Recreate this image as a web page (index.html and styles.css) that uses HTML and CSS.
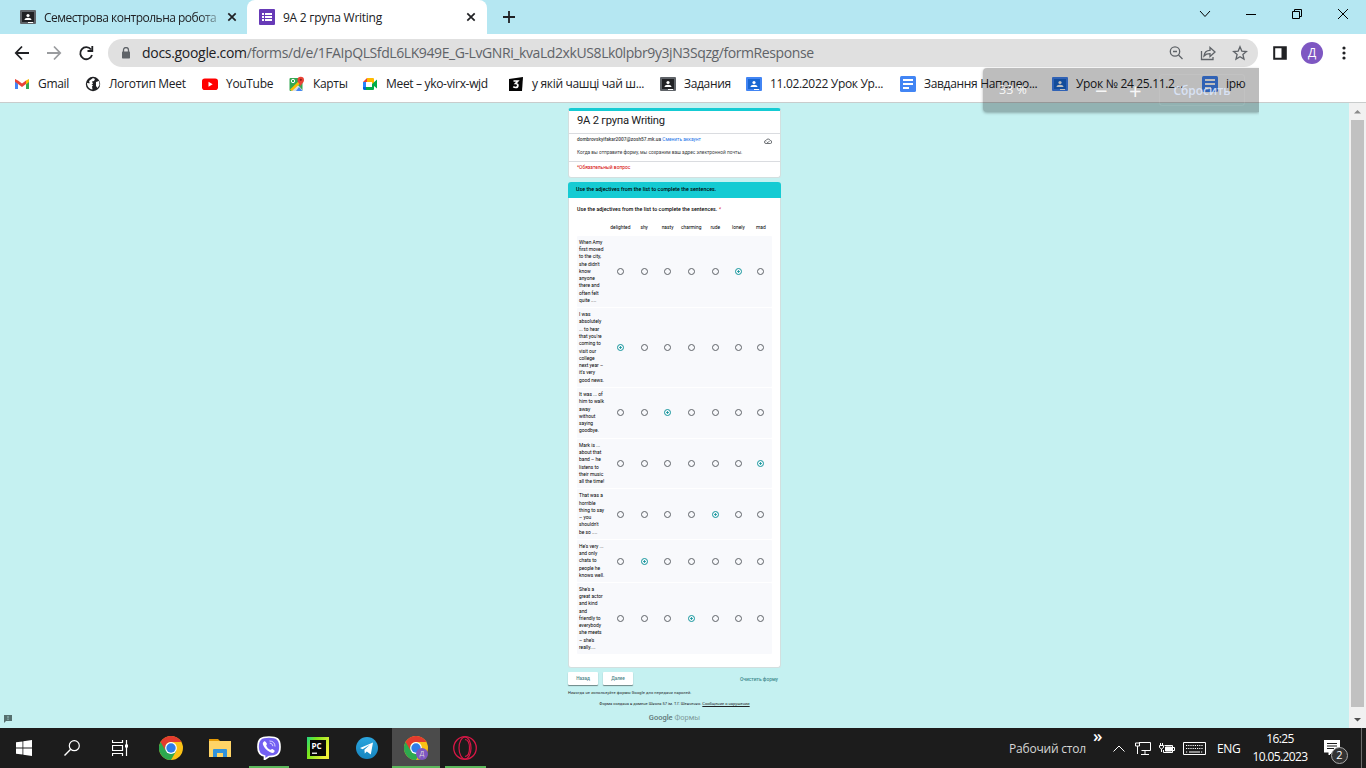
FILE: index.html
```html
<!DOCTYPE html>
<html lang="ru">
<head>
<meta charset="utf-8">
<title>9А 2 група Writing</title>
<link rel="stylesheet" href="styles.css">
</head>
<body>
<svg class="defs" width="0" height="0">
  <symbol id="classroom" viewBox="0 0 16 16"><rect y="1" width="16" height="14" rx="1" fill="var(--edge)"/><rect x="2" y="3" width="12" height="10" fill="var(--board)"/><circle cx="8" cy="6.5" r="1.6" fill="#fff"/><path d="M4.5 11c0-3 7-3 7 0zM8 13h5v1H8z" fill="#fff"/></symbol>
  <symbol id="doc" viewBox="0 0 16 16"><rect width="16" height="16" rx="1.5" fill="var(--board)"/><path d="M3 3h10v2H3zM3 7h10v2H3zM3 11h6v2H3z" fill="#fff"/></symbol>
  <symbol id="close" viewBox="0 0 10 10"><path d="M1.3 1.3l7.4 7.4M8.7 1.3L1.3 8.7" stroke="#202124" stroke-width="1.7"/></symbol>
  <symbol id="chrome" viewBox="0 0 24 24"><circle cx="12" cy="12" r="12" fill="#fbc116"/><path d="M12 12L1.6 6A12 12 0 0 0 12 24l5.2-9z" fill="#2da94f"/><path d="M1.6 6a12 12 0 0 1 20.8 0H12a6 6 0 0 0-5.2 9z" fill="#e33b2e"/><circle cx="12" cy="12" r="5.9" fill="#fff"/><circle cx="12" cy="12" r="4.7" fill="#2f7de9"/></symbol>
</svg>
<header class="browser">
  <div class="tabs">
    <div class="tab first"><svg class="fav dark"><use href="#classroom"/></svg><span class="tabname fade">Семестрова контрольна робота</span><svg class="x"><use href="#close"/></svg></div>
    <div class="tab active"><svg class="fav" viewBox="0 0 16 16"><rect width="16" height="16" rx="1" fill="#673ab7"/><path d="M3 4h2v2H3zm0 3h2v2H3zm0 3h2v2H3zM6 4h7v2H6zm0 3h7v2H6zm0 3h7v2H6z" fill="#fff"/></svg><span class="tabname">9А 2 група Writing</span><svg class="x"><use href="#close"/></svg></div>
    <svg class="plus" viewBox="0 0 12 12"><path d="M6 0v12M0 6h12" stroke="#202124" stroke-width="1.8"/></svg>
    <div class="winctl">
      <svg width="12" height="12" viewBox="0 0 12 12"><path d="M1 3l5 5.5L11 3"/></svg>
      <svg width="12" height="12" viewBox="0 0 12 12"><path d="M1 6.5h10"/></svg>
      <svg width="12" height="12" viewBox="0 0 12 12"><path d="M1.5 3.5h7v7h-7zM3.500 3.500v-2h7v7h-2"/></svg>
      <svg width="12" height="12" viewBox="0 0 12 12"><path d="M1 1l10 10M11 1L1 11"/></svg>
    </div>
  </div>
  <div class="toolbar">
    <svg class="nav" viewBox="0 0 16 16"><path d="M15 8H2M8 1.500L1.800 8 8 14.500"/></svg>
    <svg class="nav off" viewBox="0 0 16 16"><path d="M1 8h13M8 1.500L14.200 8 8 14.500"/></svg>
    <svg class="nav" viewBox="0 0 16 16"><path d="M13 4.500A6 6 0 1 0 14 10M14.300 1v5H9.500"/></svg>
    <div class="omnibox">
      <svg class="lock" viewBox="0 0 10 12"><path d="M2.500 5V3a2.500 2.500 0 0 1 5 0v2" fill="none" stroke="#5f6368" stroke-width="1.300"/><rect x="1" y="4.500" width="8" height="7" rx=".7" fill="#5f6368"/></svg>
      <span class="url"><b>docs.google.com</b>/forms/d/e/1FAIpQLSfdL6LK949E_G-LvGNRi_kvaLd2xkUS8Lk0lpbr9y3jN3Sqzg/formResponse</span>
      <div class="actions">
        <svg viewBox="0 0 16 16"><circle cx="7" cy="6.500" r="4.700"/><path d="M10.500 10l4 4M5 6.500h4"/></svg>
        <svg viewBox="0 0 16 16"><path d="M1.500 6v8.500H13V12M4 11c.5-4 2.500-5.700 6-5.700V2.500L15 7l-5 4.500V8.700C7 8.700 5.500 9.500 4 11z"/></svg>
        <svg viewBox="0 0 16 16"><path d="M8 1.800l1.800 4.300 4.600.4-3.500 3 1.100 4.600L8 11.700l-4 2.400 1.100-4.600-3.500-3 4.600-.4z"/></svg>
      </div>
    </div>
    <svg class="panel" viewBox="0 0 14 14"><path d="M1.200 1.200h11.600v11.600H1.200z" fill="none" stroke="#202124" stroke-width="2"/><path d="M8.500 1H13v12H8.500z" fill="#202124"/></svg>
    <span class="avatar">Д</span>
    <svg class="dots" viewBox="0 0 4 14"><circle cx="2" cy="2" r="1.600"/><circle cx="2" cy="7" r="1.600"/><circle cx="2" cy="12" r="1.600"/></svg>
  </div>
  <nav class="bookmarks">
    <div><svg viewBox="0 0 16 16"><path d="M1 3.500V13h3V7.500z" fill="#4285f4"/><path d="M15 3.500V13h-3V7.500z" fill="#34a853"/><path d="M12 4.500L15 3v3l-3 2.500z" fill="#fbbc04"/><path d="M1 3l3 1.500 4 3 4-3V8l-4 3-4-3-3-2.300z" fill="#ea4335"/></svg><span>Gmail</span></div>
    <div><svg viewBox="0 0 16 16"><circle cx="8" cy="8" r="7.200" fill="#202124"/><path d="M2 7l4 .5 2 2-1 1 .5 3C4 13 2 10 2 7zM8 2l2 1-1 2-2 .5L8 8H5L4 5zM11 6l3-1 .5 4-2 3-1.500-2z" fill="#fff"/></svg><span>Логотип Meet</span></div>
    <div><svg viewBox="0 0 16 16"><rect y="2.500" width="16" height="11.500" rx="2.800" fill="#f00"/><path d="M6.500 5.800v5l4.200-2.500z" fill="#fff"/></svg><span>YouTube</span></div>
    <div><svg viewBox="0 0 16 16"><rect x=".5" y="2" width="13" height="13" rx="1" fill="#34a853"/><path d="M2 15l6-7 5.500 6v1z" fill="#dadce0"/><path d="M1 13.500L12 3l2 2L3 15z" fill="#fbbc04"/><path d="M7 15l3-4 3.500 4z" fill="#4285f4"/><circle cx="4" cy="5" r="1.700" fill="none" stroke="#fff"/><path d="M11.700 11c0-3-3.200-4-3.200-7a3.200 3.200 0 0 1 6.500 0c0 3-3.300 4-3.300 7z" fill="#ea4335"/><circle cx="11.800" cy="3.800" r="1.100" fill="#8c1d18"/></svg><span>Карты</span></div>
    <div><svg viewBox="0 0 16 16"><path d="M1 6h3v5H1z" fill="#2684fc"/><path d="M1 11h3v3H2.500Q1 14 1 12.500z" fill="#0066da"/><path d="M1 6l4-4v4z" fill="#ea4335"/><path d="M5 2h6q1 0 1 1v4l-2 1V6H5z" fill="#ffba00"/><path d="M4 11h6V8l5-4.500v9L12 10v3q0 1-1 1H4z" fill="#00ac47"/></svg><span>Meet – yko-virx-wjd</span></div>
    <div><svg viewBox="0 0 16 16"><path d="M1 3l14-2-1 14H1z" fill="#050505"/><path d="M5.500 5h4.300L7.600 7.500c3 0 3 4 0 4-1.100 0-1.700-.3-2.300-.8" fill="none" stroke="#fff" stroke-width="1.700"/></svg><span>у якій чашці чай ш...</span></div>
    <div><svg class="dark"><use href="#classroom"/></svg><span>Задания</span></div>
    <div><svg class="blue"><use href="#classroom"/></svg><span>11.02.2022 Урок Ур...</span></div>
    <div><svg class="blue2"><use href="#doc"/></svg><span>Завдання Наполео...</span></div>
    <div><svg class="blue"><use href="#classroom"/></svg><span>Урок № 24 25.11.2...</span></div>
    <div><svg class="blue2"><use href="#doc"/></svg><span>ірю</span></div>
  </nav>
  <div class="bubble"><span class="pct">33 %</span><span class="sign">−</span><span class="sign">+</span><span class="reset">Сбросить</span></div>
</header>

<div class="viewport">
  <main class="page">
    <section class="card head">
      <h1>9А 2 група Writing</h1>
      <div class="account">
        <p><span class="t-mail"><b>dombrovskyifakar2007@zosh57.mk.ua</b> <a>Сменить аккаунт</a></span><svg width="8" height="6" viewBox="0 0 16 12"><path d="M4 11a3 3 0 0 1 0-6 4.500 4.500 0 0 1 8.500 0 3 3 0 0 1 0 6zM5.500 7.500l2 2 4-4" fill="none" stroke="#5f6368" stroke-width="1.800"/></svg></p>
        <p><span class="t-note">Когда вы отправите форму, мы сохраним ваш адрес электронной почты.</span></p>
      </div>
      <div class="required">*Обязательный вопрос</div>
    </section>
    <section class="card quiz">
      <h2>Use the adjectives from the list to complete the sentences.</h2>
      <h3>Use the adjectives from the list to complete the sentences. <i>*</i></h3>
      <div class="row labels"><span></span><span>delighted</span><span>shy</span><span>nasty</span><span>charming</span><span>rude</span><span>lonely</span><span>mad</span></div>
      <div class="row h71"><p>When Amy<br>first moved<br>to the city,<br>she didn't<br>know<br>anyone<br>there and<br>often felt<br>quite ....</p><i></i><i></i><i></i><i></i><i></i><i class="on"></i><i></i></div>
      <div class="row h79"><p>I was<br>absolutely<br>... to hear<br>that you're<br>coming to<br>visit our<br>college<br>next year –<br>it's very<br>good news.</p><i class="on"></i><i></i><i></i><i></i><i></i><i></i><i></i></div>
      <div class="row h50"><p>It was ... of<br>him to walk<br>away<br>without<br>saying<br>goodbye.</p><i></i><i></i><i class="on"></i><i></i><i></i><i></i><i></i></div>
      <div class="row h50"><p>Mark is ...<br>about that<br>band – he<br>listens to<br>their music<br>all the time!</p><i></i><i></i><i></i><i></i><i></i><i></i><i class="on"></i></div>
      <div class="row h50"><p>That was a<br>horrible<br>thing to say<br>– you<br>shouldn't<br>be so ....</p><i></i><i></i><i></i><i></i><i class="on"></i><i></i><i></i></div>
      <div class="row h42"><p>He's very ...<br>and only<br>chats to<br>people he<br>knows well.</p><i></i><i class="on"></i><i></i><i></i><i></i><i></i><i></i></div>
      <div class="row h71"><p>She's a<br>great actor<br>and kind<br>and<br>friendly to<br>everybody<br>she meets<br>– she's<br>really....</p><i></i><i></i><i></i><i class="on"></i><i></i><i></i><i></i></div>
    </section>
    <div class="buttons"><button>Назад</button><button>Далее</button><a>Очистить форму</a></div>
    <p class="never">Никогда не используйте формы Google для передачи паролей.</p>
    <p class="made">Форма создана в домене Школа 57 ім. Т.Г. Шевченко. <u>Сообщение о нарушении</u></p>
    <p class="brand"><b>Google</b> Формы</p>
  </main>
  <svg class="report" viewBox="0 0 8 8"><path d="M0 0h8v6H2L0 8z" fill="#56706f"/><path d="M3.500 1h1v2.500h-1zm0 3h1v1h-1z" fill="#9fc4c4"/></svg>
  <div class="scroll"><svg viewBox="0 0 17 17"><path d="M5 10.500L8.500 7l3.500 3.500z" fill="#8a8a8a"/></svg><div></div><svg viewBox="0 0 17 17"><path d="M5 7l3.500 3.500L12 7z" fill="#505050"/></svg></div>
</div>

<footer class="taskbar">
  <div class="apps">
    <div><svg width="16" height="16" viewBox="0 0 16 16"><path d="M0 2.300L6.500 1.400v6.200H0zM7.300 1.300L16 0v7.600H7.300zM0 8.400h6.500v6.200L0 13.700zM7.300 8.400H16V16l-8.700-1.300z" fill="#fff"/></svg></div>
    <div><svg width="16" height="16" viewBox="0 0 16 16"><circle cx="10.300" cy="5.700" r="5" fill="none" stroke="#fff" stroke-width="1.200"/><path d="M6.700 9.300L.5 15.500" stroke="#fff" stroke-width="1.400"/></svg></div>
    <div class="task"><svg width="16" height="16" viewBox="0 0 16 16"><path d="M.5 0v2.500h10V0M.5 5.500h10v5H.5zM.5 16v-2.500h10V16M14.500 0v16" fill="none" stroke="#fff" stroke-width="1.200"/><path d="M13 4.500h3v3h-3z" fill="#fff"/></svg></div>
    <div><svg width="24" height="24"><use href="#chrome"/></svg></div>
    <div><svg width="22" height="20" viewBox="0 0 22 20"><path d="M0 1h9l2 2v4H0z" fill="#e59a05"/><path d="M0 3h22v16H0z" fill="#ffd466"/><path d="M4 19v-7q0-1 1-1h12q1 0 1 1v7h-4v-4H8v4z" fill="#3293dc"/></svg></div>
    <div class="run"><svg width="24" height="24" viewBox="0 0 24 24"><path d="M12 1c8 0 11 2 11 10 0 7-3 9.500-11 9.500l-4.500 3V20C2.500 19 1 16 1 11 1 3 4 1 12 1z" fill="#7360f2" stroke="#fff" stroke-width="1.700"/><path d="M7 5.500c1-1 2 .5 2.800 2 .5 1-.8 1.500-.5 2.300.8 2 2 3.200 3.800 4 .9.300 1.300-1.200 2.300-.7 1.600.9 2.900 1.700 1.900 2.800-1 1.300-2.100 1.400-4 .4C9.600 14.500 7.300 12 6 8.700 5.500 7.300 6 6.300 7 5.500z" fill="#fff"/><path d="M12.500 5c3.500 0 5.500 2 5.500 5.500M12.700 7.200c2 .1 3 1.200 3.100 3" fill="none" stroke="#ddd7ff" stroke-width="1"/></svg></div>
    <div><svg width="22" height="22" viewBox="0 0 22 22"><defs><linearGradient id="pc" x2="1" y2=".5"><stop stop-color="#21d789"/><stop offset=".35" stop-color="#78e51c"/><stop offset="1" stop-color="#eff03a"/></linearGradient></defs><rect width="22" height="22" fill="url(#pc)"/><rect x="3" y="3" width="16" height="16" fill="#080808"/><path d="M5 15.500h5v1.500H5z" fill="#ddd"/><text x="4.500" y="11.500" class="pc">PC</text></svg></div>
    <div><svg width="22" height="22" viewBox="0 0 22 22"><defs><linearGradient id="tg" x2="0" y2="1"><stop stop-color="#2ba6df"/><stop offset="1" stop-color="#1684be"/></linearGradient></defs><circle cx="11" cy="11" r="11" fill="url(#tg)"/><path d="M4 11l13-5.500-2.200 12-4-3-2 2-.4-3.700 5.500-5-7.300 4.500z" fill="#fff"/></svg></div>
    <div class="run current"><svg width="24" height="24"><use href="#chrome"/></svg><span class="badge">Д</span></div>
    <div class="run"><svg width="24" height="24" viewBox="0 0 24 24" fill="none" stroke="#d91746"><circle cx="12" cy="12" r="11.300" stroke-width="1.300"/><ellipse cx="12" cy="12" rx="6" ry="11" stroke-width="1.200"/><path d="M12 3.500c6 .5 6 16.500 0 17" stroke-width="1.200"/></svg></div>
  </div>
  <div class="tray">
    <span class="desk">Рабочий стол</span><span class="more">»</span>
    <svg class="up" viewBox="0 0 12 7"><path d="M.5 6.500L6 1l5.500 5.500"/></svg>
    <svg class="net" viewBox="0 0 16 14"><path d="M4 1.500h11.500v8H6.500M10 9.500v4M6 13.500h8M.5 2h4v3h-4zM2.500 5v8"/></svg>
    <svg class="bat" viewBox="0 0 16 12"><path d="M5.500 3.500h8v7h-9V8M14 5.500h1.500v3H14M.5 3.500h4v2q-2 3-4 0zM1.500 1v2M3.500 1v2M2.500 7v3"/><path d="M6.500 5h6v4h-6z" fill="#fff"/></svg>
    <svg class="kbd" viewBox="0 0 23 13"><path d="M.5.500h22v12H.5zM6 10h11"/><path d="M3 3.500h17M3 6.500h17M3 10h2M18 10h2" stroke-dasharray="1.200 1"/></svg>
    <span class="lang">ENG</span>
    <div class="clock"><span>16:25</span><span>10.05.2023</span></div>
    <div class="notes"><svg width="16" height="16" viewBox="0 0 16 16"><path d="M0 0h16v12H8l-3 3v-3H0z" fill="#fff"/><path d="M3 3.500h10M3 6h10M3 8.500h7" stroke="#1c1c1c"/></svg><span>2</span></div>
    <div class="peek"></div>
  </div>
</footer>
</body>
</html>
```

FILE: styles.css
```css
* { box-sizing: border-box; }
body { margin: 0; width: 1366px; height: 768px; overflow: hidden; display: flex; flex-direction: column; font-family: "Open Sans", "Noto Sans", sans-serif; font-size: 12px; color: #202124; }
p, h1, h2, h3 { margin: 0; }
svg { display: block; flex: none; }
.defs { position: absolute; }
.dark { --edge: #5f6368; --board: #202124; }
.blue { --edge: #4285f4; --board: #1967d2; }
.blue2 { --board: #4285f4; }

.browser { height: 103px; position: relative; background: #fff; border-bottom: 1px solid #c9cccc; flex: none; }
.tabs { height: 34px; background: #b5e7f2; display: flex; align-items: center; }
.tab { display: flex; align-items: center; height: 34px; }
.tab.first { width: 247px; padding-left: 20px; }
.tab.active { width: 240px; padding-left: 12px; background: #fff; border-radius: 8px 8px 0 0; }
.fav { width: 16px; height: 16px; }
.tabname { margin-left: 8px; width: 176px; white-space: nowrap; letter-spacing: -.25px; }
.first .tabname { letter-spacing: -.5px; }
.active .tabname { width: 181px; }
.fade { -webkit-mask-image: linear-gradient(90deg, #000 88%, rgba(0,0,0,.25)); mask-image: linear-gradient(90deg, #000 88%, rgba(0,0,0,.25)); }
.x { width: 10px; height: 10px; margin-left: 7px; }
.active .x { margin-left: 2px; }
.plus { width: 12px; height: 12px; margin-left: 16px; }
.winctl { margin-left: auto; display: flex; gap: 34px; padding-right: 17px; margin-top: -6px; fill: none; stroke: #000; stroke-width: 1; }

.toolbar { height: 35px; display: flex; align-items: center; margin-top: 1px; }
.nav { width: 16px; height: 16px; margin-left: 14px; margin-right: 2px; fill: none; stroke: #202124; stroke-width: 1.8; }
.nav.off { stroke: #9a9c9f; }
.omnibox { margin-left: 12px; width: 1150px; height: 28px; border-radius: 14px; background: #e0e0e0; display: flex; align-items: center; padding: 0 10px 0 13px; }
.lock { width: 10px; height: 12px; }
.url { margin-left: 11px; font-size: 14px; color: #5f6368; white-space: nowrap; letter-spacing: -.41px; margin-top: -1px; }
.url b { font-weight: 400; color: #202124; letter-spacing: -.3px; }
.actions { display: flex; gap: 16px; margin-left: auto; }
.actions svg { width: 16px; height: 16px; fill: none; stroke: #5f6368; stroke-width: 1.3; }
.panel { width: 14px; height: 14px; margin-left: 15px; }
.avatar { width: 22px; height: 22px; margin-left: 14px; border-radius: 50%; background: #7e57c2; color: #fff; text-align: center; line-height: 21px; font-size: 12px; }
.dots { width: 4px; height: 14px; margin-left: 19px; fill: #202124; }

.bookmarks { height: 28px; display: grid; grid-template-columns: 71px 117px 87px 73px 146px 152px 86px 154px 152px 150px 60px; padding-left: 14px; align-items: center; }
.bookmarks div { display: flex; align-items: center; gap: 8px; white-space: nowrap; letter-spacing: -.32px; }
.bookmarks span { margin-top: -1px; }
.bookmarks svg { width: 16px; height: 16px; }
.bubble { position: absolute; left: 983px; top: 68px; width: 276px; height: 44px; z-index: 3; display: flex; align-items: center; border-radius: 4px 0 0 4px; background: rgba(0,0,0,.26); box-shadow: 0 1px 3px rgba(0,0,0,.3); clip-path: inset(-4px 0 -4px -4px); color: rgba(255,255,255,.9); padding-left: 16px; }
.pct { width: 96px; font-size: 12.5px; margin-top: -2px; }
.sign { width: 34px; font-size: 22px; line-height: 20px; text-align: left; }
.reset { margin-left: -4px; width: 86px; height: 32px; line-height: 31px; text-align: center; border: 1px solid rgba(255,255,255,.08); border-radius: 3px; font-weight: 600; color: rgba(222,233,255,.85); }

.viewport { height: 625px; flex: none; display: grid; grid-template-columns: 568px 213px 568px 17px; background: #c5f1f1; position: relative; font-family: Roboto, sans-serif; }
.page { grid-column: 2; padding-top: 5px; }
.card { background: #fff; border: 1px solid #d3dfdf; border-radius: 3px; }
.head { height: 70px; border-top: 3px solid #15cbd3; }
.head h1 { height: 22px; line-height: 20px; padding-left: 8px; font-size: 11.2px; font-weight: 400; white-space: nowrap; letter-spacing: -.24px; }
.account { height: 29px; border: solid #dadce0; border-width: 1px 0; padding: 0 8px; font-size: 4.8px; color: #3c4043; }
.account p { height: 11px; display: flex; align-items: center; justify-content: space-between; white-space: nowrap; }
.account p + p { height: 15px; }
.account svg { margin-top: 3px; }
.account a { color: #1a73e8; }
.account b { font-weight: 500; }
.required { padding-left: 8px; line-height: 11px; font-size: 4.9px; color: #d50000; }
.quiz { height: 486px; margin-top: 4px; border-top: 0; }
.quiz h2 { margin: 0 -1px; height: 16px; line-height: 15px; padding-left: 8px; background: #15cbd3; border-radius: 3px 3px 0 0; font-size: 5.2px; letter-spacing: .075px; font-weight: 500; color: #000; }
.quiz h3 { line-height: 22px; height: 22px; padding-left: 8px; font-size: 5.2px; letter-spacing: .075px; font-weight: 500; color: #000; }
.quiz h3 i { color: #d93025; }
.row { margin: 0 8px 1px; display: grid; grid-template-columns: 31.5px 23.7px 24px 22.8px 24.5px 23.5px 22.8px 22.2px; align-items: center; justify-items: center; background: #f8f9fc; border-radius: 1px; font-size: 4.9px; line-height: 7.27px; color: #000; }
.row p { justify-self: start; padding-left: 2px; white-space: nowrap; }
.labels { background: none; height: 15px; margin-bottom: 1px; }
.h71 { height: 71px; } .h79 { height: 79px; } .h50 { height: 49.7px; } .h42 { height: 42px; }
.row i { width: 7px; height: 7px; border: 1px solid #5f6368; border-radius: 50%; }
.row i.on { border-color: #13969c; background: radial-gradient(circle, #13969c 0 .9px, transparent 1.4px); }
.buttons { margin-top: 4px; height: 13px; display: flex; align-items: center; font-size: 4.9px; }
.buttons button { width: 30px; height: 13px; margin-right: 5px; padding: 0; border: 0; border-radius: 1px; background: #fff; box-shadow: 0 1px 1px rgba(0,0,0,.45); font: 500 4.7px Roboto, sans-serif; color: #4e8588; }
.buttons a { margin-left: auto; padding-right: 3px; font-weight: 500; color: #438c8f; }
.never { margin-top: 4px; line-height: 8px; font-size: 4px; letter-spacing: .09px; white-space: nowrap; }
.made { margin-top: 3px; line-height: 8px; font-size: 4px; letter-spacing: .03px; text-align: center; white-space: nowrap; }
.brand { margin-top: 4px; line-height: 12px; font-size: 7.5px; text-align: center; color: #7f9c9c; }
.brand b { font-weight: 500; color: #607777; }
.report { position: absolute; left: 4px; top: 612px; width: 8px; height: 8px; }
.scroll { grid-column: 4; height: 625px; background: #f1f1f1; display: grid; grid-template-rows: 17px 587px 21px; }
.scroll div { width: 13px; background: #c1c1c1; margin: 0 2px; }
.scroll svg { width: 17px; height: 17px; align-self: end; }

.taskbar { height: 40px; flex: none; background: #1c1c1c; display: flex; justify-content: space-between; color: #fff; }
.apps { display: grid; grid-template-columns: 48px 48px 50px 49px 49px 49px 49px 50px 48px 50px; }
.apps > div { position: relative; display: flex; align-items: center; justify-content: center; }
.apps > .task { padding-right: 2px; }
.run::after { content: ""; position: absolute; left: 5px; right: 4px; bottom: 0; height: 2px; background: #5cb85c; }
.current { background: #4b4b4b; }
.apps .current::after { left: 0; right: 0; }
.badge { position: absolute; left: 24px; top: 20px; width: 12px; height: 12px; border-radius: 50%; background: #7e57c2; font-size: 7px; line-height: 11px; text-align: center; color: #ddd; }
.pc { font: 700 8px "Open Sans", sans-serif; fill: #fff; }
.tray { width: 357px; display: flex; align-items: center; }
.tray svg { fill: none; stroke: #fff; stroke-width: 1; }
.desk { width: 84px; color: #d6d6d6; white-space: nowrap; letter-spacing: -.2px; }
.more { width: 20px; font-size: 17px; line-height: 17px; margin-top: -26px; font-weight: 600; }
.up { width: 12px; height: 7px; }
.net { width: 16px; height: 14px; margin-left: 10px; }
.bat { width: 16px; height: 12px; margin-left: 8px; }
.kbd { width: 23px; height: 13px; margin-left: 8px; }
.lang { width: 24px; margin-left: 11px; letter-spacing: -.4px; }
.clock { margin-left: 10px; width: 58px; display: flex; flex-direction: column; align-items: center; line-height: 18px; letter-spacing: -.6px; white-space: nowrap; }
.notes { position: relative; margin-left: 15px; }
.notes span { position: absolute; left: 7px; top: 7px; width: 17px; height: 17px; border-radius: 50%; border: 1px solid #aaa; background: #333; font-size: 11px; line-height: 14px; text-align: center; }
.peek { margin-left: auto; margin-right: 4px; width: 1px; height: 40px; background: #6c6c6c; }
```
